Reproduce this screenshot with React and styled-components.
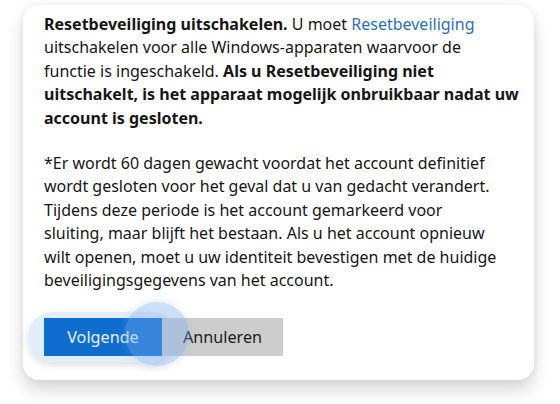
import React from "react";
import styled, { createGlobalStyle } from "styled-components";

const GlobalStyle = createGlobalStyle`
  html, body {
    margin: 0;
    padding: 0;
    background: #ffffff;
  }
  body {
    font-family: "Noto Sans", "Open Sans", Arial, sans-serif;
  }
`;

// Outer page area around the dialog card
const Page = styled.div`
  width: 560px;
  height: 404px;
  padding: 5px 26px 0 23px;
  box-sizing: border-box;
  overflow: hidden;
`;

// White dialog card with rounded corners and soft shadow
const Card = styled.div`
  width: 511px;
  height: 375px;
  box-sizing: border-box;
  background: #ffffff;
  border-radius: 16px;
  box-shadow: 0 10px 18px rgba(0, 0, 0, 0.16), 0 0 8px rgba(0, 0, 0, 0.06);
  padding: 8px 16px 0 21px;
  display: flex;
  flex-direction: column;
`;

const Paragraph = styled.p`
  margin: 0 0 ${(props) => props.gap || 0}px;
  font-size: 16px;
  line-height: 23.4px;
  color: #161616;
  white-space: nowrap;
`;

const Strong = styled.b`
  font-weight: 700;
`;

const Link = styled.span`
  color: #2f6fb6;
`;

// Row with the two action buttons
const ButtonRow = styled.div`
  position: relative;
  display: flex;
  margin-top: 26px;
`;

const Button = styled.button`
  position: relative;
  z-index: 1;
  width: ${(props) => props.width}px;
  height: 38px;
  border: none;
  margin: 0;
  padding: 0;
  font-family: inherit;
  font-size: 16.2px;
  color: ${(props) => (props.primary ? "#e8f1fc" : "#1b1b1b")};
  background: ${(props) => (props.primary ? "#0f6dcf" : "#cdcdcd")};
`;

// Soft halo behind the focused primary button
const Halo = styled.div`
  position: absolute;
  left: -16px;
  top: -6px;
  width: 148px;
  height: 50px;
  border-radius: 25px;
  background: rgba(224, 236, 252, 0.95);
  box-shadow: 0 3px 8px rgba(0, 0, 0, 0.14);
  z-index: 0;
`;

// Touch ripple circle lying over the buttons
const Ripple = styled.div`
  position: absolute;
  left: 81px;
  top: -16px;
  width: 64px;
  height: 64px;
  border-radius: 50%;
  background: rgba(120, 175, 240, 0.38);
  box-shadow: 0 0 10px rgba(120, 175, 240, 0.3);
  z-index: 2;
  pointer-events: none;
`;

export default function App() {
  return (
    <Page>
      <GlobalStyle />
      <Card>
        <Paragraph gap={22}>
          <Strong>Resetbeveiliging uitschakelen.</Strong> U moet{" "}
          <Link>Resetbeveiliging</Link>
          <br />
          uitschakelen voor alle Windows-apparaten waarvoor de
          <br />
          functie is ingeschakeld. <Strong>Als u Resetbeveiliging niet</Strong>
          <br />
          <Strong>uitschakelt, is het apparaat mogelijk onbruikbaar nadat uw</Strong>
          <br />
          <Strong>account is gesloten.</Strong>
        </Paragraph>
        <Paragraph>
          *Er wordt 60 dagen gewacht voordat het account definitief
          <br />
          wordt gesloten voor het geval dat u van gedacht verandert.
          <br />
          Tijdens deze periode is het account gemarkeerd voor
          <br />
          sluiting, maar blijft het bestaan. Als u het account opnieuw
          <br />
          wilt openen, moet u uw identiteit bevestigen met de huidige
          <br />
          beveiligingsgegevens van het account.
        </Paragraph>
        <ButtonRow>
          <Halo />
          <Button primary width={118}>
            Volgende
          </Button>
          <Button width={121}>Annuleren</Button>
          <Ripple />
        </ButtonRow>
      </Card>
    </Page>
  );
}
